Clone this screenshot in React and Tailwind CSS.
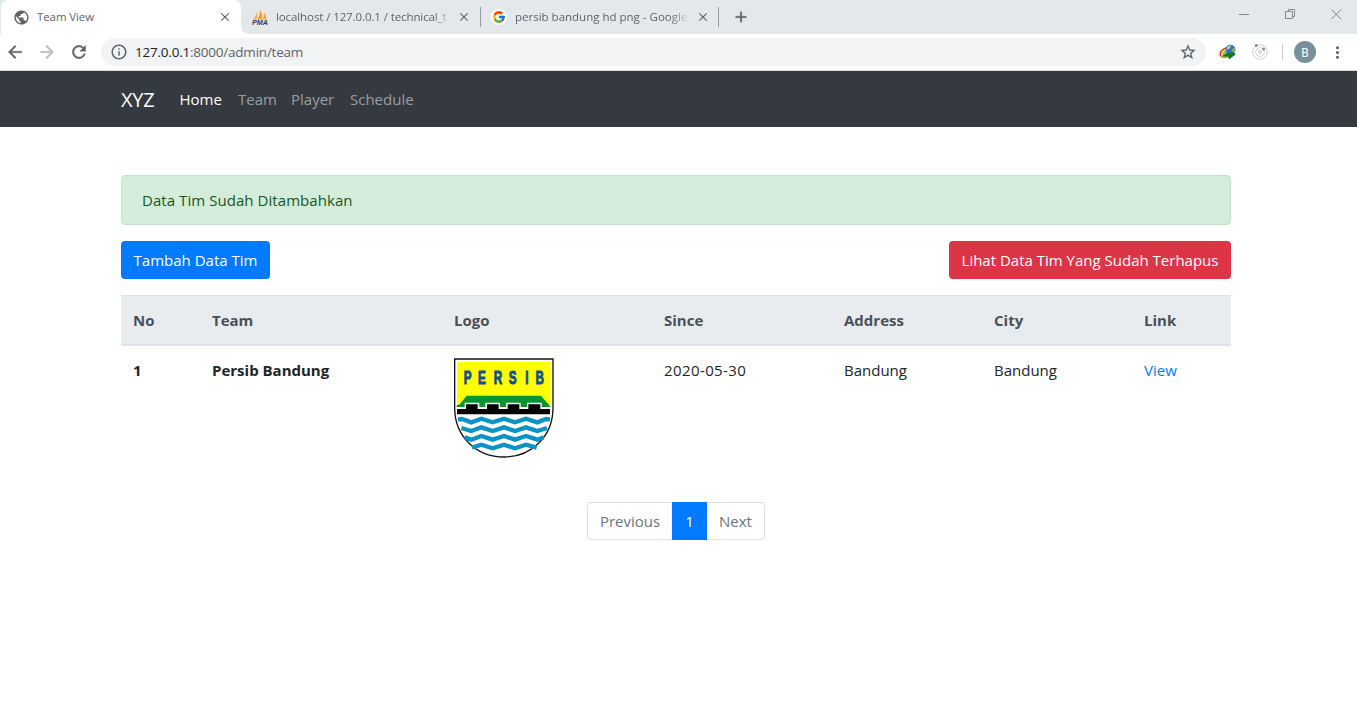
import React from "react";
import { MdPublic, MdClose, MdAdd, MdArrowBack, MdArrowForward, MdRefresh, MdInfoOutline, MdStarBorder, MdMoreVert } from "react-icons/md";
import { FcGoogle } from "react-icons/fc";

function PmaIcon() {
  return (
    <svg className="h-4 w-4 shrink-0" viewBox="0 0 16 16">
      <path d="M1 10.5C3 8 4.3 5.500 4.800 2.500C5.800 5 6 8 5.300 10.500Z" fill="#fbb560" />
      <path d="M5.500 10.500C7.500 7 8 4 7.800 0.500C10 4 10.600 7.500 10 10.500Z" fill="#f79a2a" />
      <path d="M10.600 10.500C11.800 8 12 5.500 11.600 3C13.800 5.500 14.600 8 14.600 10.500Z" fill="#f9a640" />
      <text x="0" y="15.800" fontFamily="Liberation Sans, sans-serif" fontWeight="bold" fontStyle="italic" fontSize="6.500" textLength="16" lengthAdjust="spacingAndGlyphs" fill="#33366b">PMA</text>
    </svg>
  );
}

function DownloadIcon() {
  return (
    <svg className="h-[18px] w-[18px]" viewBox="0 0 18 18">
      <ellipse cx="7" cy="9.500" rx="6.200" ry="4.200" fill="#fff" stroke="#d8362a" strokeWidth="1.500" transform="rotate(-28 7 9.500)" />
      <ellipse cx="7.500" cy="10.200" rx="5" ry="3.300" fill="none" stroke="#f5cf2b" strokeWidth="1.500" transform="rotate(-28 7.500 10.200)" />
      <ellipse cx="7.800" cy="11" rx="4" ry="2.500" fill="none" stroke="#3faa3c" strokeWidth="1.200" transform="rotate(-28 7.800 11)" />
      <circle cx="11.500" cy="6.800" r="5" fill="#3c72c4" />
      <path d="M7.500 5Q9 2 12 2.500L11 5L8 7Z" fill="#b7d98b" />
      <path d="M13 6L15.800 4.500Q16.800 7 15.300 9L13.500 9Z" fill="#8fb84e" />
      <path d="M6 10.500L10 9.500L15.500 10L16.500 11.500L10 16.500L9 13.500L4 13Z" fill="#147a1c" />
    </svg>
  );
}

function OrbitIcon() {
  return (
    <svg className="h-[18px] w-[18px]" viewBox="0 0 18 18" fill="none">
      <circle cx="9" cy="9" r="7.300" stroke="#cfcfcf" />
      <circle cx="9" cy="9" r="4.300" stroke="#cfcfcf" />
      <circle cx="9" cy="9" r="2" fill="#d5d5d5" />
      <circle cx="5.300" cy="2.600" r="1.500" fill="#8c8c8c" />
      <circle cx="12.600" cy="6.100" r="1.500" fill="#8c8c8c" />
    </svg>
  );
}

function PersibLogo() {
  return (
    <svg className="block h-[100px] w-[100px]" viewBox="30 24 300 300">
      <path d="M32 27H327V173C327 260 261 321 180 321C98 321 32 260 32 173Z" fill="#fff" stroke="#111" strokeWidth="4" />
      <path d="M39 35H320V165H39Z" fill="#ff0" />
      <path d="M38 165L46 164L68 137H291L315 165L320 171H38Z" fill="#0a9431" />
      <path d="M39 171H62V158H106V171H124V158H168V171H186V158H230V171H249V158H293V171H320V195H39Z" fill="#fff" />
      <path d="M39 177H66V163H101V177H129V163H164V177H191V163H226V177H253V163H289V177H318V193H39Z" fill="#000" />
      <g fill="#12508f" transform="scale(0.650 1)" fontFamily="Liberation Sans, sans-serif" fontWeight="bold" fontSize="54" textAnchor="middle" stroke="#12508f" strokeWidth="3">
        <text x="109" y="103">P</text>
        <text x="175" y="103">E</text>
        <text x="249" y="103">R</text>
        <text x="317" y="103">S</text>
        <text x="382" y="103">I</text>
        <text x="442" y="103">B</text>
      </g>
      <g fill="none" stroke="#0a93c4" strokeWidth="13">
        <path d="M42 208L54 207L82 217L112 206L146 217L180 206L213 217L246 206L280 217L306 207L318 208" />
        <path d="M52 234L82 243L112 232L146 243L180 232L213 243L246 232L280 243L309 234" />
        <path d="M62 262L82 269L112 258L146 269L180 258L213 269L246 258L280 269L299 262" />
        <path d="M84 293L112 284L146 295L180 284L213 295L246 284L278 293" />
      </g>
    </svg>
  );
}

const rows = [{ no: 1, team: "Persib Bandung", since: "2020-05-30", address: "Bandung", city: "Bandung" }];

function Browser() {
  return (
    <header className="font-['Open_Sans',sans-serif] text-[#5f6368]">
      <div className="flex h-[34px] bg-[#e5e8eb] pl-px">
        <div className="flex w-[240px] items-center rounded-t-lg bg-white pr-[9px] pl-[12px]">
          <MdPublic className="h-[17px] w-[17px] shrink-0" />
          <span className="ml-[7px] flex-1 text-[11.5px] tracking-[-0.1px]">Team View</span>
          <MdClose className="h-[14px] w-[14px] [&>path[fill=none]]:stroke-none" stroke="currentColor" />
        </div>
        <div className="h-full w-[239px] bg-white">
          <div className="flex h-full items-center rounded-bl-lg bg-[#e5e8eb] pr-[9px] pl-[11px]">
            <PmaIcon />
            <span className="ml-[8px] w-[176px] overflow-hidden text-[11.5px] tracking-[-0.1px] whitespace-nowrap [mask-image:linear-gradient(to_right,black_90%,transparent)]">localhost / 127.0.0.1 / technical_t</span>
            <MdClose className="ml-[5px] h-[14px] w-[14px] shrink-0 [&>path[fill=none]]:stroke-none" stroke="currentColor" />
          </div>
        </div>
        <div className="flex w-[239px] items-center">
          <div className="h-5 w-px shrink-0 bg-[#9a9da1]" />
          <span className="ml-[10px] flex h-4 w-4 shrink-0 items-center justify-center rounded-full bg-white"><FcGoogle className="h-[14px] w-[14px]" /></span>
          <span className="ml-[8px] w-[176px] overflow-hidden text-[11.5px] whitespace-nowrap [mask-image:linear-gradient(to_right,black_88%,transparent)]">persib bandung hd png - Google</span>
          <MdClose className="ml-[5px] h-[14px] w-[14px] shrink-0 [&>path[fill=none]]:stroke-none" stroke="currentColor" />
        </div>
        <div className="flex items-center">
          <div className="-ml-px h-5 w-px bg-[#9a9da1]" />
          <MdAdd className="ml-[13px] h-[18px] w-[18px] [&>path[fill=none]]:stroke-none" stroke="currentColor" strokeWidth="0.5" />
        </div>
        <svg className="mt-[8px] mr-[15px] ml-auto h-3 w-[103px]" viewBox="0 0 103 12" fill="none" stroke="#85888b">
          <path d="M0 6.500H10M49.500 3.500V1.500H55.500V8.500H53.500M46.500 3.500H53.500V10.500H46.500ZM92.500 1.500L102 11M102 1.500L92.500 11" />
        </svg>
      </div>
      <div className="flex h-9 items-center bg-white pl-[5px]">
        <MdArrowBack className="h-5 w-5 [&>path[fill=none]]:stroke-none" stroke="currentColor" strokeWidth="0.4" />
        <MdArrowForward className="ml-3 h-5 w-5 text-[#b9bbbe] [&>path[fill=none]]:stroke-none" stroke="currentColor" strokeWidth="0.4" />
        <MdRefresh className="ml-[12px] h-5 w-5 [&>path[fill=none]]:stroke-none" stroke="currentColor" strokeWidth="0.4" />
        <div className="ml-[12px] flex h-7 w-[1105px] items-center rounded-full bg-[#f1f3f4] pr-[9px] pl-[9px]">
          <MdInfoOutline className="h-[18px] w-[18px]" />
          <span className="ml-[7px] flex-1 text-[13.5px] tracking-[-0.22px]"><span className="text-[#202124]">127.0.0.1</span>:8000/admin/team</span>
          <MdStarBorder className="h-[18px] w-[18px] [&>path[fill=none]]:stroke-none" stroke="currentColor" strokeWidth="0.3" />
        </div>
        <div className="ml-[13px]"><DownloadIcon /></div>
        <div className="ml-[14px]"><OrbitIcon /></div>
        <div className="ml-[13px] h-4 w-px bg-[#c6c8ca]" />
        <div className="ml-[11px] flex h-[22px] w-[22px] items-center justify-center rounded-full bg-[#78909c] pt-px font-[Roboto,sans-serif] text-[12px] text-white">B</div>
        <MdMoreVert className="ml-[12px] h-[19px] w-[19px]" />
      </div>
      <div className="h-px bg-[#d6dade]" />
    </header>
  );
}

export default function App() {
  return (
    <div className="h-[728px] w-[1357px] overflow-hidden bg-white font-['Open_Sans',sans-serif] text-[15px] leading-6 text-[#212529]">
      <Browser />
      <nav className="flex h-14 items-center bg-[#343a40] pl-[121px] text-white/50">
        <a className="w-[58.5px] pt-px text-[20px] tracking-[-0.2px] text-white">XYZ</a>
        <a className="w-[58.5px] text-white">Home</a>
        <a className="w-[53px]">Team</a>
        <a className="w-[59px]">Player</a>
        <a>Schedule</a>
      </nav>
      <main className="ml-[121px] w-[1110px] pt-12">
        <div className="flex h-[50px] items-center rounded border border-[#c3e6cb] bg-[#d4edda] px-5 tracking-[0.06px] text-[#155724]">Data Tim Sudah Ditambahkan</div>
        <div className="my-4 flex h-[38px] justify-between text-white">
          <button className="w-[149px] rounded bg-[#007bff] whitespace-nowrap">Tambah Data Tim</button>
          <button className="w-[282px] rounded bg-[#dc3545] whitespace-nowrap">Lihat Data Tim Yang Sudah Terhapus</button>
        </div>
        <table className="w-full table-fixed border-separate border-spacing-0 text-left">
          <colgroup>
            <col className="w-[79px]" /><col className="w-[242px]" /><col className="w-[210px]" /><col className="w-[180px]" /><col className="w-[150px]" /><col className="w-[150px]" /><col className="w-[99px]" />
          </colgroup>
          <thead className="bg-[#e9ecef] text-[#495057]">
            <tr>
              {["No", "Team", "Logo", "Since", "Address", "City", "Link"].map((h) => (
                <th key={h} className="h-[51px] border-t border-b-2 border-[#dee2e6] px-3 py-0 font-bold">{h}</th>
              ))}
            </tr>
          </thead>
          <tbody>
            {rows.map((r) => (
              <tr key={r.no} className="align-top">
                <th className="p-3">{r.no}</th>
                <th className="p-3">{r.team}</th>
                <td className="p-3"><PersibLogo /></td>
                <td className="p-3 tracking-[0.4px]">{r.since}</td>
                <td className="p-3">{r.address}</td>
                <td className="p-3">{r.city}</td>
                <td className="p-3 text-[#007bff]">View</td>
              </tr>
            ))}
          </tbody>
        </table>
        <div className="mt-8 flex h-[38px] justify-center text-[#6c757d]">
          <span className="flex w-[85px] items-center justify-center rounded-l border border-r-0 border-[#dee2e6]">Previous</span>
          <span className="flex w-[35px] items-center justify-center bg-[#007bff] text-white">1</span>
          <span className="flex w-[58px] items-center justify-center rounded-r border border-l-0 border-[#dee2e6]">Next</span>
        </div>
      </main>
    </div>
  );
}
